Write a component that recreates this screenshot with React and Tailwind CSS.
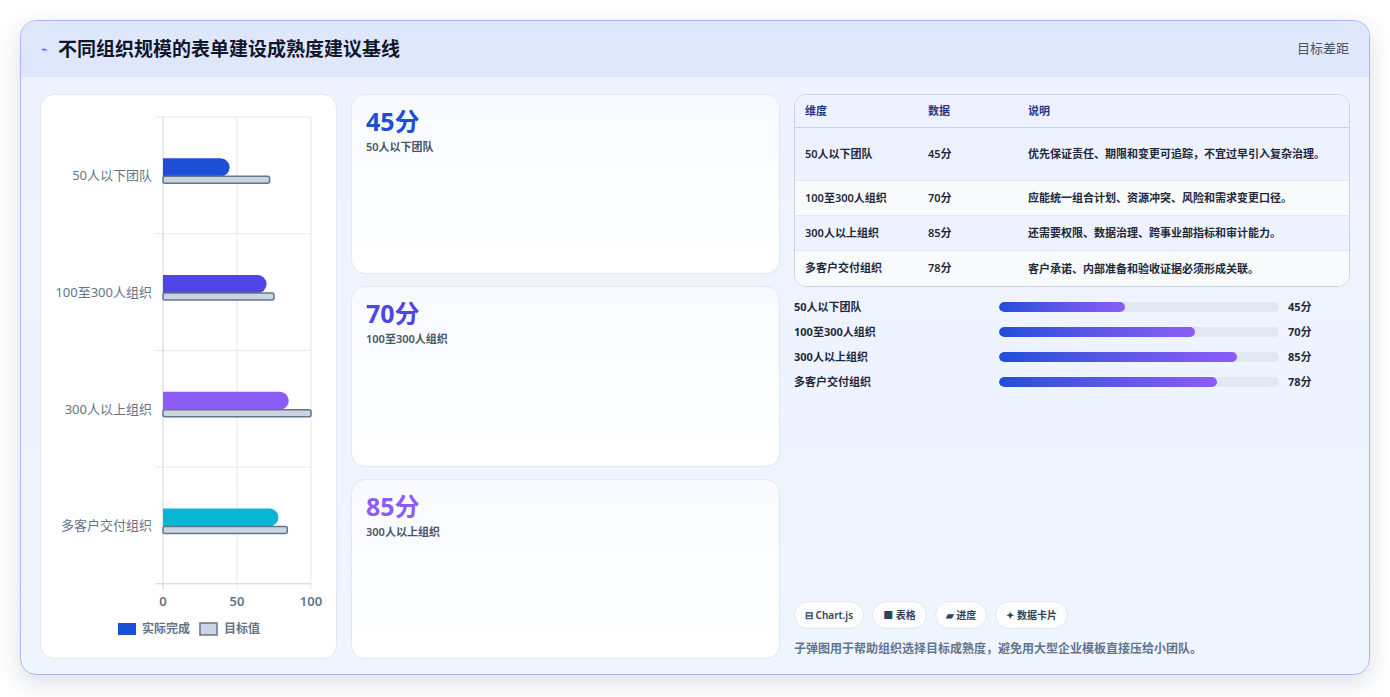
export default function App() {
  const rows = [
    { n: "50人以下团队", a: 45, t: 72, c: "#1d4ed8" },
    { n: "100至300人组织", a: 70, t: 75, c: "#4f46e5" },
    { n: "300人以上组织", a: 85, t: 100, c: "#8b5cf6" },
    { n: "多客户交付组织", a: 78, t: 84, c: "#06b6d4" },
  ];
  const x0 = 122, w = 148, top = 22, rh = 116.7;
  const table = [
    ["50人以下团队", "45分", "优先保证责任、期限和变更可追踪，不宜过早引入复杂治理。"],
    ["100至300人组织", "70分", "应能统一组合计划、资源冲突、风险和需求变更口径。"],
    ["300人以上组织", "85分", "还需要权限、数据治理、跨事业部指标和审计能力。"],
    ["多客户交付组织", "78分", "客户承诺、内部准备和验收证据必须形成关联。"],
  ];
  const font = { fontFamily: '"Noto Sans","Noto Sans CJK SC",sans-serif' };
  return (
    <div className="w-[1390px] h-[697px] bg-white p-[20px] pb-[22px]" style={font}>
      <div className="h-full rounded-[16px] border border-[#a9b8e8] overflow-hidden shadow-[0_8px_24px_rgba(30,41,90,0.15)] bg-gradient-to-b from-[#eef2ff] to-[#eff6ff] flex flex-col">
        <div className="h-[56px] shrink-0 bg-[#dfe7fd] flex items-center justify-between px-[20px]">
          <div className="flex items-center gap-[10px]">
            <span className="text-[#2563eb] text-[11px]">⌁</span>
            <span className="text-[19px] font-bold text-[#0f172a]">不同组织规模的表单建设成熟度建议基线</span>
          </div>
          <span className="text-[13px] text-[#475569]">目标差距</span>
        </div>
        <div className="flex-1 flex gap-[14px] px-[19px] pt-[17px] pb-[18px]">
          <div className="w-[297px] bg-white rounded-[14px] border border-[#e2e8f0]">
            <svg width="297" height="563" className="block">
              {[0, 50, 100].map((v) => (
                <line key={v} x1={x0 + (w * v) / 100} x2={x0 + (w * v) / 100} y1={top} y2={top + rh * 4 + 6} stroke={v === 0 ? "#cbd5e1" : "#e2e8f0"} />
              ))}
              {[0, 1, 2, 3, 4].map((i) => (
                <line key={i} x1={x0 - 8} x2={x0 + w} y1={top + rh * i} y2={top + rh * i} stroke={i === 4 ? "#cbd5e1" : "#e2e8f0"} />
              ))}
              {rows.map((r, i) => {
                const cy = top + rh * i + rh / 2;
                return (
                  <g key={i}>
                    <text x={x0 - 11} y={cy + 5} textAnchor="end" fontSize="13" fill="#64748b">{r.n}</text>
                    <path d={`M${x0} ${cy - 17} H${x0 + (w * r.a) / 100 - 9} A9 9 0 0 1 ${x0 + (w * r.a) / 100 - 9} ${cy + 1} H${x0} Z`} fill={r.c} />
                    <rect x={x0} y={cy + 1} width={(w * r.t) / 100} height={7} rx={2} fill="#cbd5e1" stroke="#64748b" strokeWidth="1.5" />
                  </g>
                );
              })}
              {[0, 50, 100].map((v) => (
                <text key={v} x={x0 + (w * v) / 100} y={511} textAnchor="middle" fontSize="13" fontWeight="600" fill="#64748b">{v}</text>
              ))}
              <rect x={77} y={528} width={18} height={12} fill="#1d4ed8" />
              <text x={101} y={538} fontSize="12" fontWeight="600" fill="#64748b">实际完成</text>
              <rect x={159} y={528} width={17} height={12} fill="#cbd5e1" stroke="#64748b" strokeWidth="1.5" />
              <text x={183} y={538} fontSize="12" fontWeight="600" fill="#64748b">目标值</text>
            </svg>
          </div>
          <div className="w-[429px] flex flex-col gap-[12px]">
            {[["45分", "50人以下团队", "text-[#1d4ed8]"], ["70分", "100至300人组织", "text-[#4f46e5]"], ["85分", "300人以上组织", "text-[#8b5cf6]"]].map(([v, l, c]) => (
              <div key={l} className="flex-1 bg-gradient-to-b from-[#f8faff] to-white rounded-[14px] border border-[#e2e8f0] px-[14px] pt-[8px]">
                <div className={`text-[25px] font-bold leading-[36px] ${c}`}>{v}</div>
                <div className="text-[11px] font-semibold text-[#475569]">{l}</div>
              </div>
            ))}
          </div>
          <div className="flex-1 flex flex-col">
            <div className="rounded-[12px] border border-[#cbd5e1] overflow-hidden text-[11px] font-semibold text-[#1e293b]">
              <div className="flex h-[33px] items-center bg-[#eef2ff] border-b border-[#cbd5e1] text-[#1e3a8a]">
                <div className="w-[133px] pl-[10px]">维度</div><div className="w-[100px]">数据</div><div>说明</div>
              </div>
              {table.map((r, i) => (
                <div key={i} className={`flex items-center border-b last:border-b-0 border-[#e2e8f0] ${i === 0 ? "h-[53px]" : "h-[35px]"} ${i % 2 ? "bg-[#f8fafc]" : "bg-[#eef2ff]"}`}>
                  <div className="w-[133px] pl-[10px] shrink-0">{r[0]}</div>
                  <div className="w-[100px] shrink-0">{r[1]}</div>
                  <div className="pr-[10px] leading-[18px]">{r[2]}</div>
                </div>
              ))}
            </div>
            <div className="mt-[12px] flex flex-col gap-[9px]">
              {rows.map((r) => (
                <div key={r.n} className="flex items-center h-[16px] text-[11px] font-bold text-[#1e293b]">
                  <div className="w-[205px]">{r.n}</div>
                  <div className="w-[280px] h-[10px] rounded-full bg-[#e2e8f0] overflow-hidden">
                    <div className="h-full rounded-full bg-gradient-to-r from-[#1d4ed8] to-[#8b5cf6]" style={{ width: `${r.a}%` }} />
                  </div>
                  <div className="ml-[9px]">{r.a}分</div>
                </div>
              ))}
            </div>
            <div className="mt-auto flex gap-[8px] text-[10px] font-semibold text-[#334155]">
              {["⊟ Chart.js", "■ 表格", "▰ 进度", "✦ 数据卡片"].map((c) => (
                <span key={c} className="h-[28px] px-[10px] flex items-center rounded-full bg-white/80 border border-[#e2e8f0]">{c}</span>
              ))}
            </div>
            <div className="mt-[10px] text-[12px] font-semibold text-[#64748b] leading-[20px]">子弹图用于帮助组织选择目标成熟度，避免用大型企业模板直接压给小团队。</div>
          </div>
        </div>
      </div>
    </div>
  );
}
